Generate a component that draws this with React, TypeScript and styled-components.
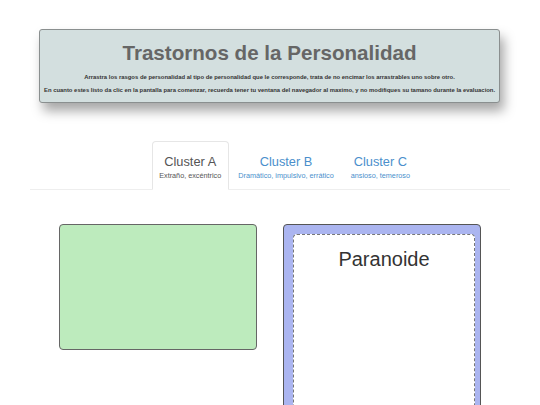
import React from 'react';
import styled, { createGlobalStyle } from 'styled-components';

const GlobalStyle = createGlobalStyle`
  html, body {
    margin: 0;
    padding: 0;
    background: #fff;
    font-family: "Liberation Sans", Arial, sans-serif;
    overflow: hidden;
  }
`;

const Page = styled.div`
  width: 540px;
  height: 405px;
  padding-top: 29px;
  box-sizing: border-box;
  overflow: hidden;
`;

const Header = styled.div`
  margin: 0 40px 0 39px;
  padding: 12px 4px 6px;
  background: #d3dfdf;
  border: 1px solid #8a8f8f;
  border-radius: 3px;
  box-shadow: 4px 8px 12px rgba(0, 0, 0, 0.35);
  text-align: center;

  h1 {
    margin: 0 0 7.4px;
    font-size: 20.6px;
    line-height: 22px;
    font-weight: bold;
    color: #666;
  }

  p {
    margin: 0;
    font-size: 5.9px;
    line-height: 12.3px;
    font-weight: bold;
    color: #333;
    white-space: nowrap;
  }
`;

const Nav = styled.div`
  display: flex;
  gap: 2px;
  margin: 38px 30px 0;
  padding-left: 121.7px;
  border-bottom: 1px solid #eee;
`;

const Tab = styled.div<{ $active?: boolean }>`
  padding: 12.4px 6.5px 8.2px;
  margin-bottom: -1px;
  border: 1px solid ${(p) => (p.$active ? '#e6e6e6' : 'transparent')};
  border-bottom-color: ${(p) => (p.$active ? '#fff' : 'transparent')};
  border-radius: 4px 4px 0 0;
  background: ${(p) => (p.$active ? '#fff' : 'transparent')};
  text-align: center;
  color: ${(p) => (p.$active ? '#555' : '#4a8fcc')};

  .name {
    font-size: 12.8px;
    line-height: 15px;
    margin-bottom: 1.4px;
  }

  .desc {
    font-size: 7.25px;
    line-height: 10px;
    white-space: nowrap;
  }
`;

const Cards = styled.div`
  display: flex;
  align-items: flex-start;
  gap: 25.4px;
  margin-top: 33.7px;
  padding-left: 59px;
`;

const Draggable = styled.div`
  width: 198.3px;
  height: 126.3px;
  box-sizing: border-box;
  background: #bdebbd;
  border: 1px solid #666;
  border-radius: 4px;
`;

const Target = styled.div`
  width: 198px;
  height: 240px;
  box-sizing: border-box;
  padding: 9px;
  background: #abb5f0;
  border: 1px solid #555;
  border-radius: 4px;
`;

const DropZone = styled.div`
  width: 182.6px;
  height: 220px;
  box-sizing: border-box;
  padding-top: 13px;
  background: #fff;
  border: 1px dashed #777;
  border-radius: 4px;
  text-align: center;
  font-size: 20px;
  color: #333;
`;

const tabs = [
  { name: 'Cluster A', desc: 'Extraño, excéntrico', active: true },
  { name: 'Cluster B', desc: 'Dramático, impulsivo, errático' },
  { name: 'Cluster C', desc: 'ansioso, temeroso' },
];

const App = () => {
  return (
    <Page>
      <GlobalStyle />
      <Header>
        <h1>Trastornos de la Personalidad</h1>
        <p>
          Arrastra los rasgos de personalidad al tipo de personalidad que le corresponde, trata de no
          encimar los arrastrables uno sobre otro.
        </p>
        <p>
          En cuanto estes listo da clic en la pantalla para comenzar, recuerda tener tu ventana del
          navegador al maximo, y no modifiques su tamano durante la evaluacion.
        </p>
      </Header>
      <Nav>
        {tabs.map((tab, i) => (
          <Tab key={i} $active={tab.active}>
            <div className="name">{tab.name}</div>
            <div className="desc">{tab.desc}</div>
          </Tab>
        ))}
      </Nav>
      <Cards>
        <Draggable />
        <Target>
          <DropZone>Paranoide</DropZone>
        </Target>
      </Cards>
    </Page>
  );
};

export default App;
